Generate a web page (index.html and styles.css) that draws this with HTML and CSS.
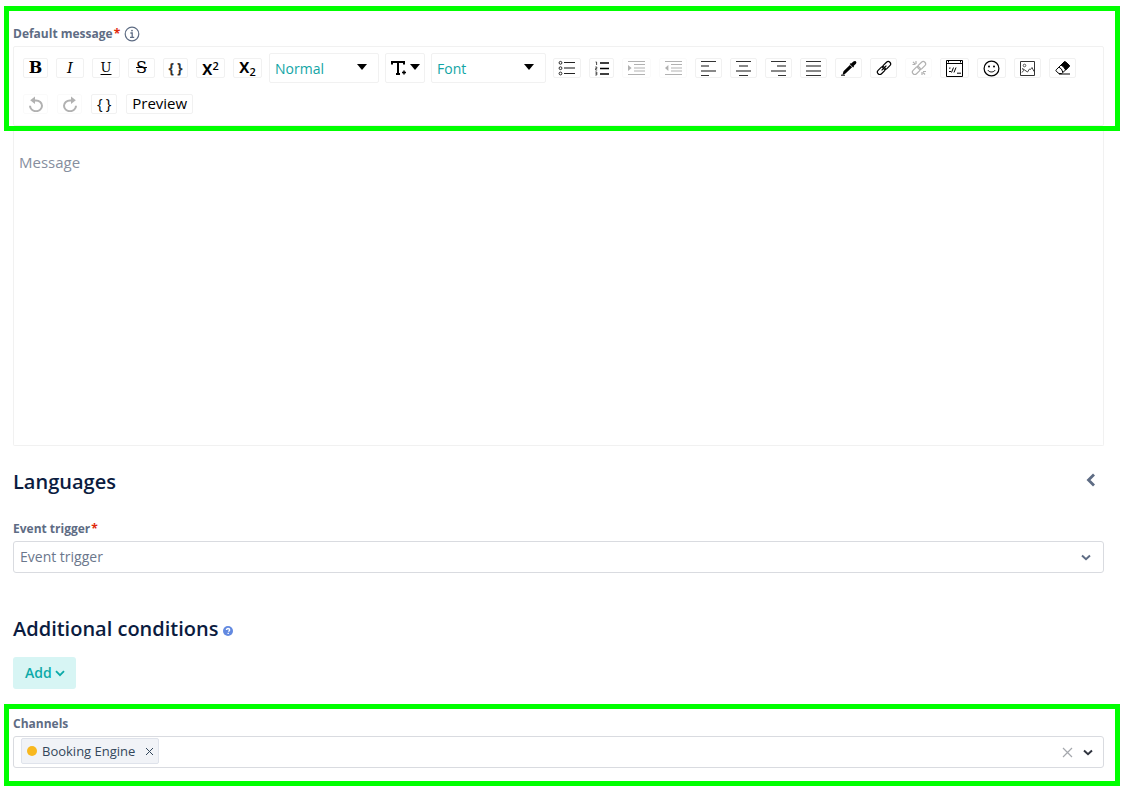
FILE: index.html
```html
<!DOCTYPE html>
<html lang="en">
<head>
<meta charset="utf-8">
<title>Message template</title>
<link rel="stylesheet" href="styles.css">
</head>
<body>
<form class="page">
  <section class="highlight highlight-editor">
    <div class="label-row">
      <label class="label" for="message">Default message<span class="required">*</span></label>
      <svg class="info" viewBox="0 0 16 16" width="16" height="16" fill="none" stroke="currentColor"><circle cx="8" cy="8" r="6.8" stroke-width="1.2"/><path d="M6.4 7h1.8v4.2M6 11.4h4.2" stroke-width="1.3"/><circle cx="8" cy="4.6" r=".9" fill="currentColor" stroke="none"/></svg>
    </div>
    <div class="toolbar" role="toolbar" aria-label="Formatting">
      <div class="tool-row">
        <button type="button" class="tool w25 glyph-bold" aria-label="Bold">B</button>
        <button type="button" class="tool w28 glyph-italic" aria-label="Italic">I</button>
        <button type="button" class="tool w28 glyph-underline" aria-label="Underline">U</button>
        <button type="button" class="tool w27 glyph-strike" aria-label="Strikethrough">S</button>
        <button type="button" class="tool w25 glyph-code" aria-label="Monospace"><span>{</span><span>}</span></button>
        <button type="button" class="tool w29 glyph-script" aria-label="Superscript"><span>x<sup>2</sup></span></button>
        <button type="button" class="tool w29 glyph-script glyph-sub" aria-label="Subscript"><span>x<sub>2</sub></span></button>
        <div class="drop drop-block">
          <select class="drop-select" aria-label="Block type"><option>Normal</option></select>
          <span class="caret"></span>
        </div>
        <button type="button" class="drop drop-size" aria-label="Font size">
          <svg viewBox="0 0 16 16" width="16" height="16" fill="none" stroke="#000"><path d="M1 4.500V2h12v2.500M7 2v12M5 14h4" stroke-width="2"/><path d="M11 12.500h4M13 10.500v4" stroke-width="1.500"/></svg>
          <span class="caret"></span>
        </button>
        <div class="drop drop-font">
          <select class="drop-select" aria-label="Font family"><option>Font</option></select>
          <span class="caret"></span>
        </div>
        <button type="button" class="tool w28" aria-label="Unordered list">
          <svg viewBox="0 0 18 16" width="18" height="16" fill="none" stroke="#222"><circle cx="2.5" cy="2.8" r="1.4"/><circle cx="2.5" cy="8.2" r="1.4"/><circle cx="2.5" cy="13.5" r="1.4"/><path d="M6 2.5h11M6 13.5h11"/><path d="M6 8h11" stroke="#888" stroke-width="2"/></svg>
        </button>
        <button type="button" class="tool w25" aria-label="Ordered list">
          <svg viewBox="0 0 14 16" width="14" height="16" fill="none" stroke="#000"><path d="M5 3h9M5 8.5h9M5 14h9" stroke-width="1.6"/><path d="M.6 2h1v3M.3 7h1.5v1.500H.6V10h1.600M.3 12h1.500v3H.3M.6 13.500h1" stroke="#333" stroke-width=".9"/></svg>
        </button>
        <button type="button" class="tool w29 off" aria-label="Indent" disabled>
          <svg viewBox="0 0 17 16" width="17" height="16" fill="none" stroke="#000"><path d="M0 1.5h17M0 14.5h17M6 4.5h11M6 8h11M6 11h11" stroke-width="1.2"/><path d="M0 5v6l3.600-3z" fill="#000" stroke="none"/></svg>
        </button>
        <button type="button" class="tool w28 off" aria-label="Outdent" disabled>
          <svg viewBox="0 0 17 16" width="17" height="16" fill="none" stroke="#000"><path d="M0 1.5h17M0 14.5h17M6 4.5h11M6 8h11M6 11h11" stroke-width="1.2"/><path d="M3.4 5v6L0 8z" fill="#000" stroke="none"/></svg>
        </button>
        <button type="button" class="tool w27" aria-label="Align left">
          <svg viewBox="0 0 15 16" width="15" height="16" fill="none" stroke="#333"><path d="M0 1.5h15M0 15.5h8"/><path d="M0 6h8M0 11h15" stroke="#888" stroke-width="2"/></svg>
        </button>
        <button type="button" class="tool w27" aria-label="Align center">
          <svg viewBox="0 0 15 16" width="15" height="16" fill="none" stroke="#333"><path d="M0 1.5h15M3 15.5h9"/><path d="M3 6h9M0 11h15" stroke="#888" stroke-width="2"/></svg>
        </button>
        <button type="button" class="tool w27" aria-label="Align right">
          <svg viewBox="0 0 15 16" width="15" height="16" fill="none" stroke="#333"><path d="M0 1.5h15M7 15.5h8"/><path d="M6 6h9M0 11h15" stroke="#888" stroke-width="2"/></svg>
        </button>
        <button type="button" class="tool w27" aria-label="Justify">
          <svg viewBox="0 0 15 16" width="15" height="16" fill="none" stroke="#333"><path d="M0 1.5h15M0 15.5h15"/><path d="M0 6h15M0 11h15" stroke="#888" stroke-width="2"/></svg>
        </button>
        <button type="button" class="tool w27" aria-label="Text color">
          <svg viewBox="0 0 16 16" width="16" height="16"><path d="M1.500 14.800l1-3.600 6.400-6.200 2.200 2.200-6.600 6.400-1.800.8zM8.600 4l1-.8.6.4 2.200-2c1-.9 1.900-.8 2.500-.2.700.7.700 1.600-.2 2.500L12.600 6l.4.700-.9.900z"/><path d="M0 15.200h4" stroke="#000"/></svg>
        </button>
        <button type="button" class="tool w27" aria-label="Link">
          <svg viewBox="0 0 16 16" width="16" height="16" fill="none" stroke="#000" stroke-width="1.200"><rect x="6.200" y="3" width="9" height="4.800" rx="2.400" transform="rotate(-45 10.700 5.400)"/><rect x=".8" y="8.200" width="9" height="4.800" rx="2.400" transform="rotate(-45 5.300 10.600)"/><path d="M5.600 10.400l4.800-4.800"/></svg>
        </button>
        <button type="button" class="tool w27 off" aria-label="Unlink" disabled>
          <svg viewBox="0 0 16 16" width="16" height="16" fill="none" stroke="#000" stroke-width="1.200"><rect x="6.200" y="3" width="9" height="4.800" rx="2.400" transform="rotate(-45 10.700 5.400)"/><rect x=".8" y="8.200" width="9" height="4.800" rx="2.400" transform="rotate(-45 5.300 10.600)"/><path d="M5 1v3M1.500 4.500h3M2 1.800l2 2M11 12v3M12 11.500h3M12 12.500l2 2"/></svg>
        </button>
        <button type="button" class="tool w29" aria-label="Embed">
          <svg viewBox="0 0 17 17" width="17" height="17" fill="none" stroke="#000"><path d="M.5.5h16v16H.5zM.5 3.500h16M2.500.5v2M14.500.5v2"/><path d="M5.500 12.500l2-5M8 12.500l2-5M3 8.200l1.500-.2M3 11.500h2M11 13.200h4"/></svg>
        </button>
        <button type="button" class="tool w29" aria-label="Emoji">
          <svg viewBox="0 0 17 17" width="17" height="17" fill="none" stroke="#000"><circle cx="8.500" cy="8.500" r="7.400" stroke-width="1.200"/><circle cx="6" cy="6.500" r="1" fill="#000" stroke="none"/><circle cx="11" cy="6.500" r="1" fill="#000" stroke="none"/><path d="M5 10.200c1 2.300 6 2.300 7 0"/></svg>
        </button>
        <button type="button" class="tool w27" aria-label="Image">
          <svg viewBox="0 0 15 15" width="15" height="15" fill="none" stroke="#333"><path d="M.5.500h14v14H.5z"/><circle cx="4.500" cy="4.500" r="1.300" stroke-width=".8"/><path d="M2 11.500l1.500-2L2.500 7.500l5 3.500 2-3 1 .5 1.500-2 2 4" stroke-width=".9"/></svg>
        </button>
        <button type="button" class="tool w27" aria-label="Remove formatting">
          <svg viewBox="0 0 16 16" width="16" height="16" fill="none" stroke="#000"><path d="M1.200 9.800L8.600 2.400q1-1 2.200 0l3 2.600q1 1 0 2L6.600 13.600H4L1.200 11.200q-.6-.7 0-1.400zM4 7.200q3 1.200 3.800 5" /><path d="M6 5L9 2q.8-.7 1.600 0L14 5q.8.800 0 1.600L10.600 10Q9.200 6.600 6 5z" fill="#000"/><path d="M4 14h11"/></svg>
        </button>
      </div>
      <div class="tool-row tool-row-history">
        <button type="button" class="tool w25 off" aria-label="Undo" disabled>
          <svg viewBox="0 0 16 16" width="16" height="16" fill="none" stroke="#000" stroke-width="2"><path d="M2 9.800a6 5.400 0 1 0 6-5.400H6"/><path d="M7 .6v7.400L2.200 4.300z" fill="#000" stroke="none"/></svg>
        </button>
        <button type="button" class="tool w25 off" aria-label="Redo" disabled>
          <svg viewBox="0 0 16 16" width="16" height="16" fill="none" stroke="#000" stroke-width="2"><path d="M14 9.800a6 5.400 0 1 1-6-5.400h2"/><path d="M9 .6v7.400l4.800-3.700z" fill="#000" stroke="none"/></svg>
        </button>
        <button type="button" class="tool tool-text" aria-label="Placeholders"><span>{</span><span>}</span></button>
        <button type="button" class="tool tool-text">Preview</button>
      </div>
    </div>
  </section>

  <textarea class="message" id="message" placeholder="Message"></textarea>

  <div class="body">
    <div class="heading-row">
      <h2 class="heading">Languages</h2>
      <button type="button" class="collapse" aria-label="Expand languages">
        <svg viewBox="0 0 10 14" width="10" height="14" fill="none" stroke="currentColor" stroke-width="2.800"><path d="M8 1.500L2.500 7 8 12.500"/></svg>
      </button>
    </div>

    <label class="label label-block" for="trigger">Event trigger<span class="required">*</span></label>
    <div class="field">
      <select class="field-select" id="trigger"><option>Event trigger</option></select>
      <svg class="field-chevron" viewBox="0 0 10 8" width="10" height="8" fill="none" stroke="currentColor" stroke-width="2"><path d="M1 2.600l4 3.600 4-3.600"/></svg>
    </div>

    <div class="heading-row heading-conditions">
      <h2 class="heading">Additional conditions</h2>
      <svg class="help" viewBox="0 0 10 10" width="10" height="10" fill="none"><circle cx="5" cy="5" r="5" fill="#6289e0"/><path d="M3.400 4q0-1.500 1.700-1.500 1.600.1 1.600 1.400 0 .8-1.500 1.500" stroke="#fff" stroke-width="1.300"/><path d="M4.500 6.800h1.400v1.200H4.500z" fill="#fff"/></svg>
    </div>
    <button type="button" class="add">Add
      <svg viewBox="0 0 10 8" width="10" height="8" fill="none" stroke="currentColor" stroke-width="1.800"><path d="M1 2.200l4 4 4-4"/></svg>
    </button>
  </div>

  <section class="highlight highlight-channels">
    <label class="label label-block" for="channels">Channels</label>
    <div class="field tags">
      <span class="tag"><span class="dot"></span>Booking Engine
        <button type="button" class="icon-button" aria-label="Remove Booking Engine">
          <svg viewBox="0 0 9 9" width="9" height="9" fill="none" stroke="#33475b"><path d="M1 1l7 7M8 1L1 8"/></svg>
        </button>
      </span>
      <input class="tags-input" id="channels" type="text">
      <button type="button" class="icon-button" aria-label="Clear channels">
        <svg viewBox="0 0 11 11" width="11" height="11" fill="none" stroke="#a5a8ad" stroke-width="1.200"><path d="M1 1l9 9M10 1l-9 9"/></svg>
      </button>
      <button type="button" class="icon-button" aria-label="Open channels">
        <svg viewBox="0 0 10 8" width="10" height="8" fill="none" stroke="#30343f" stroke-width="2"><path d="M1 2.600l4 3.600 4-3.600"/></svg>
      </button>
    </div>
  </section>
</form>
</body>
</html>
```
FILE: styles.css
```css
* {
  box-sizing: border-box;
}

body {
  margin: 0;
  background: #fff;
  color: #0b1c3f;
  font-family: "Open Sans", "Noto Sans", sans-serif;
  font-size: 14px;
}

button,
input,
select,
textarea {
  font: inherit;
  color: inherit;
  margin: 0;
}

svg {
  display: block;
  flex: none;
}

.page {
  padding: 6px 22px 16px 4px;
}

.highlight {
  border: 5px solid #0f0;
  padding: 0 11px 0 4px;
}

.highlight-editor {
  padding-top: 12px;
}

.label-row {
  display: flex;
  align-items: center;
  gap: 4px;
  height: 22px;
  margin-bottom: 1px;
}

.label {
  color: #5e6c84;
  font-size: 12px;
  font-weight: 700;
  line-height: 20px;
}

.label-block {
  display: block;
}

.required {
  color: #e0290b;
  margin-left: 1px;
}

.info {
  color: #5e6c84;
}

.toolbar {
  border: 1px solid #f1f1f1;
  border-radius: 2px;
  padding: 6px 5px 0;
}

.tool-row {
  display: flex;
  flex-wrap: wrap;
  align-items: center;
  min-height: 30px;
  margin-bottom: 6px;
}

.tool-row-history {
  gap: 1px;
}

.tool {
  display: flex;
  align-items: center;
  justify-content: center;
  height: 20px;
  margin: 0 4px;
  padding: 0;
  border: 1px solid #f1f1f1;
  border-radius: 2px;
  background: #fff;
  color: #000;
  line-height: 18px;
}

.w25 { width: 25px; }
.w27 { width: 27px; }
.w28 { width: 28px; }
.w29 { width: 29px; }

.off {
  opacity: 0.3;
}

.tool-text {
  gap: 3px;
  padding: 0 5px 2px;
  font-size: 15px;
}

.glyph-bold {
  font-family: "DejaVu Serif", serif;
  font-size: 16px;
  font-weight: 700;
}

.glyph-italic {
  font-family: "DejaVu Serif", serif;
  font-size: 15px;
  font-style: italic;
}

.glyph-underline {
  font-family: "DejaVu Serif", serif;
  font-size: 13px;
  text-decoration: underline;
  text-underline-offset: 2px;
}

.glyph-strike {
  font-family: "DejaVu Serif", serif;
  font-size: 16px;
  text-decoration: line-through;
}

.glyph-code {
  gap: 3px;
  color: #333;
  font-weight: 700;
}

.glyph-script {
  font-size: 19px;
  font-weight: 600;
}

.glyph-sub {
  padding-bottom: 4px;
}

.glyph-script sup,
.glyph-script sub {
  font-size: 11px;
  line-height: 0;
}

.glyph-script sup {
  vertical-align: 5px;
}

.glyph-script sub {
  vertical-align: -3px;
}

.drop {
  display: flex;
  align-items: center;
  position: relative;
  height: 30px;
  margin: 0 3px;
  padding: 0;
  border: 1px solid #f1f1f1;
  border-radius: 2px;
  background: #fff;
  color: #12a5a5;
}

.drop-block { width: 110px; }
.drop-font { width: 115px; }

.drop-size {
  width: 40px;
  padding-left: 5px;
}

.drop-select {
  width: 100%;
  height: 28px;
  padding: 0 5px;
  border: 0;
  background: transparent;
  appearance: none;
}

.caret {
  position: absolute;
  top: 10px;
  right: 11px;
  border: 5px solid transparent;
  border-top: 6px solid #000;
  border-bottom: 0;
  pointer-events: none;
}

.drop-size .caret {
  right: 4px;
}

.message {
  display: block;
  width: calc(100% - 25px);
  height: 315px;
  margin-left: 9px;
  padding: 20px 5px;
  border: 1px solid #f1f1f1;
  border-top: 0;
  border-radius: 0 0 2px 2px;
  outline: 0;
  resize: none;
  font-size: 15px;
  line-height: 22px;
}

.message::placeholder {
  color: #868e9e;
  opacity: 1;
}

.body {
  padding: 20px 16px 0 9px;
}

.heading-row {
  display: flex;
  align-items: center;
  justify-content: space-between;
  height: 32px;
  margin-bottom: 21px;
}

.heading {
  margin: 0;
  font-size: 20px;
  font-weight: 600;
  line-height: 32px;
}

.heading-conditions {
  justify-content: flex-start;
  gap: 5px;
  margin: 40px 0 12px;
}

.help {
  margin-top: 4px;
}

.collapse {
  padding: 0 8px 4px;
  border: 0;
  background: none;
  color: #5e6c84;
}

.field {
  display: flex;
  align-items: center;
  position: relative;
  height: 32px;
  margin-top: 2px;
  border: 1px solid #d9dbe0;
  border-radius: 3px;
  background: #fff;
}

.field-select {
  width: 100%;
  height: 30px;
  padding: 0 6px 2px;
  border: 0;
  background: transparent;
  color: #6b778c;
  appearance: none;
}

.field-chevron {
  position: absolute;
  right: 12px;
  color: #5e6c84;
  pointer-events: none;
}

.add {
  display: flex;
  align-items: center;
  gap: 3px;
  height: 32px;
  margin-bottom: 15px;
  padding: 0 11px 1px 12px;
  border: 0;
  border-radius: 3px;
  background: #d7f5f4;
  color: #0caaa8;
  font-weight: 600;
}

.highlight-channels {
  padding-top: 5px;
  padding-bottom: 13px;
}

.tags {
  gap: 10px;
  padding: 0 10px 0 7px;
}

.tag {
  display: flex;
  align-items: center;
  gap: 5px;
  height: 26px;
  margin-bottom: 2px;
  padding: 0 4px 0 5px;
  border: 1px solid #dfe3eb;
  border-radius: 2px;
  background: #f1f3f7;
  color: #33475b;
  font-size: 13px;
  white-space: nowrap;
}

.dot {
  width: 10px;
  height: 10px;
  border-radius: 50%;
  background: #f8b81f;
}

.tag .icon-button {
  margin-left: 5px;
}

.tags-input {
  flex: 1;
  min-width: 0;
  border: 0;
  outline: 0;
  background: none;
}

.icon-button {
  padding: 0;
  border: 0;
  background: none;
}
```
